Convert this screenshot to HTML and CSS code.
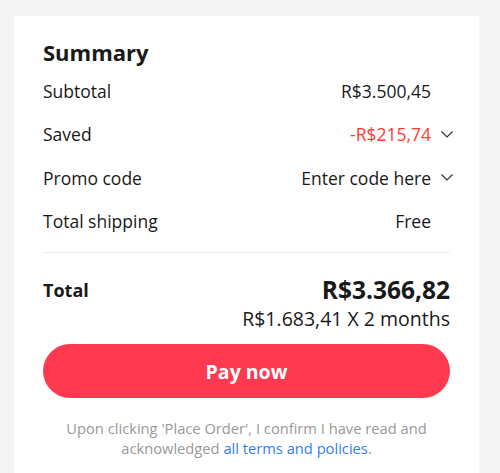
FILE: index.html
```html
<!DOCTYPE html>
<html lang="en">
<head>
  <meta charset="UTF-8">
  <title>Summary</title>
  <meta name="viewport" content="width=device-width, initial-scale=1.0">
  <link rel="stylesheet" href="styles.css">
</head>
<body>
  <div class="card">
    <h2 class="title">Summary</h2>

    <div class="row">
      <span class="label">Subtotal</span>
      <span class="value">R$3.500,45</span>
    </div>
    <div class="row">
      <span class="label">Saved</span>
      <span class="value red">-R$215,74</span>
      <svg class="chev" viewBox="0 0 12 7"><path d="M0.5 0.5 L6 6 L11.5 0.5" /></svg>
    </div>
    <div class="row">
      <span class="label">Promo code</span>
      <span class="value">Enter code here</span>
      <svg class="chev" viewBox="0 0 12 7"><path d="M0.5 0.5 L6 6 L11.5 0.5" /></svg>
    </div>
    <div class="row">
      <span class="label">Total shipping</span>
      <span class="value">Free</span>
    </div>

    <div class="divider"></div>

    <div class="total">
      <span class="total-label">Total</span>
      <div class="total-right">
        <div class="total-amount">R$3.366,82</div>
        <div class="installments">R$1.683,41 X 2 months</div>
      </div>
    </div>

    <button class="pay">Pay now</button>

    <p class="note">
      <span>Upon clicking 'Place Order', I confirm I have read and</span>
      <span>acknowledged <a href="#">all terms and policies</a>.</span>
    </p>
  </div>
</body>
</html>
```

FILE: styles.css
```css
body {
  margin: 0;
  padding: 16px 21px 0 14px;
  background: #f4f4f4;
  font-family: 'Open Sans', sans-serif;
  color: #191919;
}
.card {
  background: white;
  padding: 20px 29px 30px 29px;
}
.title {
  margin: 0 0 1px 0;
  font-size: 22px;
  line-height: 32px;
  font-weight: 700;
}
.row {
  display: flex;
  align-items: center;
  height: 43.5px;
  font-size: 17.5px;
  margin-right: -3px;
}
.label {
  flex: 1;
}
.value {
  margin-right: 22px;
}
.value:has(+ .chev) {
  margin-right: 10px;
}
.red {
  color: #ff3b30;
}
.chev {
  width: 12px;
  height: 7px;
  fill: none;
  stroke: #333;
  stroke-width: 1.2;
}
.divider {
  height: 1px;
  background: #ececec;
  margin: 9px 0 0 0;
}
.total {
  display: flex;
  justify-content: space-between;
  padding-top: 22px;
}
.total-label {
  font-size: 18px;
  font-weight: 700;
  line-height: 30px;
}
.total-right {
  text-align: right;
}
.total-amount {
  font-size: 24.5px;
  font-weight: 700;
  line-height: 30px;
}
.installments {
  font-size: 19.5px;
  line-height: 28px;
}
.pay {
  display: block;
  width: 100%;
  height: 54px;
  margin-top: 11px;
  border: none;
  border-radius: 27px;
  background: #ff3a50;
  color: white;
  font-family: 'Open Sans', sans-serif;
  font-size: 19.5px;
  font-weight: 700;
  cursor: pointer;
}
.note {
  display: flex;
  flex-direction: column;
  align-items: center;
  margin: 20px 0 0 0;
  color: #999;
  font-size: 14.7px;
  line-height: 20px;
}
.note a {
  color: #2f80ff;
  text-decoration: none;
}
```
